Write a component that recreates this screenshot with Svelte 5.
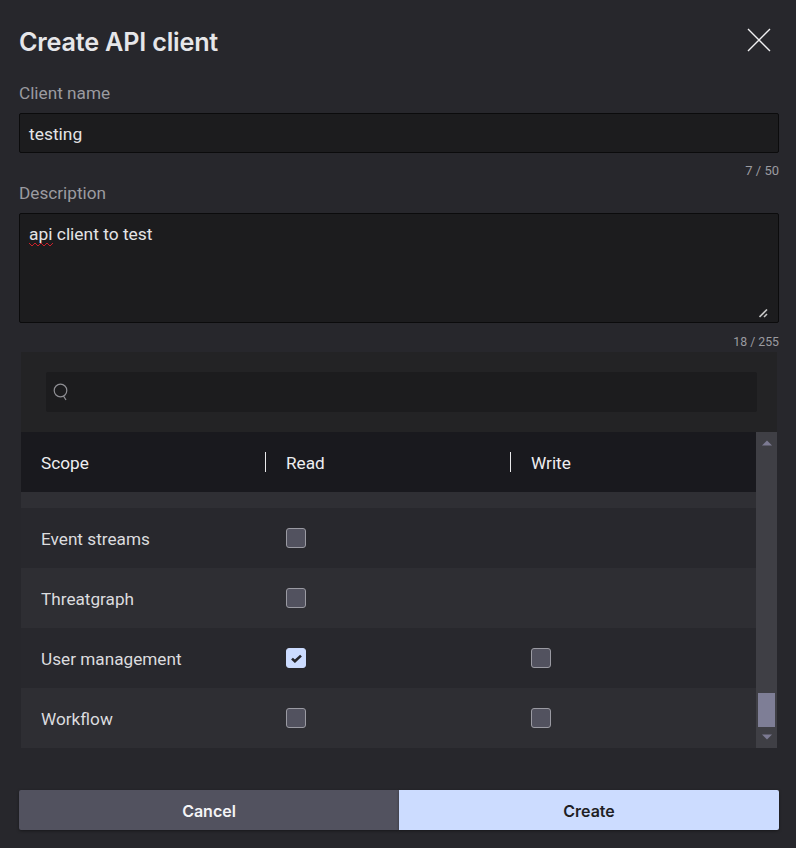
<script>
  const rows = [
    { name: 'Event streams', read: false, write: null },
    { name: 'Threatgraph', read: false, write: null },
    { name: 'User management', read: true, write: false },
    { name: 'Workflow', read: false, write: false }
  ];
</script>

<div class="dialog">
  <header class="head">
    <h1>Create API client</h1>
    <svg class="close" width="24" height="24" viewBox="0 0 24 24"><path d="M1 1 L23 23 M23 1 L1 23" stroke="#f0f0f2" stroke-width="1.4" fill="none"/></svg>
  </header>

  <div class="label first">Client name</div>
  <div class="field name">testing</div>
  <div class="count">7 / 50</div>

  <div class="label second">Description</div>
  <div class="field area">
    <span class="spell">api<svg class="wave" width="24" height="5" viewBox="0 0 24 5"><path d="M0 1 L3 4 L6 1 L9 4 L12 1 L15 4 L18 1 L21 4 L24 1" stroke="#c8202b" stroke-width="1" fill="none"/></svg></span> client to test
    <svg class="grip" width="9" height="9" viewBox="0 0 9 9"><path d="M0.5 8 L8 0.5 M5 8 L8 5" stroke="#c4c4c4" stroke-width="1.6" fill="none"/></svg>
  </div>
  <div class="count low">18 / 255</div>

  <section class="panel">
    <div class="searchbar">
      <div class="search">
        <svg width="16" height="18" viewBox="0 0 16 18"><circle cx="7.5" cy="7.5" r="6.3" stroke="#8f8f94" stroke-width="1.2" fill="none"/><path d="M10.5 13 L13 17" stroke="#8f8f94" stroke-width="1.2" fill="none"/></svg>
      </div>
    </div>
    <div class="tablewrap">
      <div class="table">
        <div class="thead">
          <div class="th c1">Scope</div>
          <div class="th c2"><span>Read</span></div>
          <div class="th c3"><span>Write</span></div>
        </div>
        <div class="strip"></div>
        {#each rows as r, i}
          <div class="row" class:alt={i % 2 === 1}>
            <div class="c1 cell"><span class="txt">{r.name}</span></div>
            <div class="c2 cell">
              <div class="box" class:on={r.read}>
                {#if r.read}
                  <svg width="11" height="9" viewBox="0 0 11 9"><path d="M1 4.6 L3.9 7.3 L10 1.6" stroke="#26262b" stroke-width="2.6" fill="none"/></svg>
                {/if}
              </div>
            </div>
            <div class="c3 cell">
              {#if r.write !== null}<div class="box"></div>{/if}
            </div>
          </div>
        {/each}
      </div>
      <div class="scroll">
        <svg class="arrow" width="14" height="6" viewBox="0 0 14 6"><path d="M7 0.5 L12 5.5 H2 Z" fill="#7c7a92"/></svg>
        <div class="thumb"></div>
        <svg class="arrow" width="14" height="6" viewBox="0 0 14 6"><path d="M2 0.5 H12 L7 5.5 Z" fill="#7c7a92"/></svg>
      </div>
    </div>
  </section>

  <div class="actions">
    <button class="cancel">Cancel</button>
    <button class="create">Create</button>
  </div>
</div>

<style>
  :global(body) { margin: 0; background: #27272c; }
  .dialog {
    width: 796px; height: 848px; box-sizing: border-box; padding: 0 17px 0 19px;
    background: #27272c; color: #e8e8ea; font-family: Roboto, "Noto Sans", sans-serif;
    overflow: hidden;
  }
  .head { display: flex; justify-content: space-between; align-items: center; height: 82px; padding-right: 1px; }
  h1 { margin: 1px 0 0; font: 600 25.2px/32px Inter, sans-serif; letter-spacing: -0.2px; color: #e6e6e9; }
  .close { margin: 0 7px 2px 0; }
  .label { font-size: 17.2px; line-height: 20px; color: #9b9ba0; }
  .first { margin-top: 1px; height: 30px; }
  .second { height: 30px; margin-top: 3px; }
  .field {
    position: relative; box-sizing: border-box; margin-right: 0; width: 760px;
    background: #1c1c1e; border: 1px solid #0b0b0c; border-radius: 2px;
    padding: 0 9px; font-size: 17.4px; color: #e4e4e6;
  }
  .name { height: 40px; line-height: 41px; }
  .area { height: 110px; line-height: 40px; }
  .spell { position: relative; }
  .wave { position: absolute; left: 0; top: 18px; }
  .grip { position: absolute; right: 10px; bottom: 4px; }
  .count { width: 760px; text-align: right; font-size: 13px; line-height: 18px; height: 18px; color: #9b9ba0; margin-top: 9px; }
  .count.low { margin-top: 10px; font-size: 12.3px; }
  .panel { width: 756px; margin: 1px 0 0 2px; }
  .searchbar { height: 80px; box-sizing: border-box; padding: 20px 20px 20px 25px; background: #232325; }
  .search { height: 40px; background: #1c1c1e; border-radius: 2px; padding: 11px 7px 0; box-sizing: border-box; }
  .search svg { display: block; }
  .tablewrap { display: flex; height: 316px; }
  .table { flex: 1; min-width: 0; }
  .thead { display: flex; height: 60px; background: #19191e; align-items: center; font-size: 17.2px; color: #eeeef0; }
  .strip { height: 16px; background: #2f2f34; }
  .row { display: flex; align-items: center; height: 60px; background: #28282d; font-size: 17.2px; color: #dcdcdf; }
  .row.alt { background: #2e2e33; }
  .txt { position: relative; top: 1px; }
  .c1 { width: 244px; padding-left: 20px; box-sizing: border-box; }
  .c2 { width: 245px; box-sizing: border-box; }
  .c3 { flex: 1; }
  .th.c1 { padding-top: 2px; }
  .th.c2 span, .th.c3 span { display: block; border-left: 1px solid #e8e8ea; padding-left: 20px; line-height: 22px; height: 20px; }
  .cell.c2 { padding-left: 21px; }
  .cell.c3 { padding-left: 21px; }
  .box {
    width: 20px; height: 20px; box-sizing: border-box; background: #52525f;
    border: 1px solid #9a9aa2; border-radius: 3px; display: flex; align-items: center; justify-content: center;
  }
  .box.on { background: #ccdcff; border-color: #ccdcff; }
  .scroll { width: 21px; background: #3f3f45; display: flex; flex-direction: column; align-items: center; position: relative; }
  .arrow { position: absolute; left: 4px; }
  .arrow:first-child { top: 8px; }
  .arrow:last-child { bottom: 8px; }
  .thumb { position: absolute; left: 2px; width: 17px; bottom: 21px; height: 34px; background: #7e7e96; }
  .actions { display: flex; width: 760px; margin-top: 42px; }
  button {
    flex: 1; height: 40px; border: 0; padding-top: 2px; font: 600 16px Inter, sans-serif; box-shadow: 0 1px 3px rgba(0,0,0,.4);
  }
  .cancel { background: #52525f; color: #f4f4f6; border-radius: 2px 0 0 2px; }
  .create { background: #ccdcff; color: #1f1f24; border-radius: 0 2px 2px 0; }
</style>
